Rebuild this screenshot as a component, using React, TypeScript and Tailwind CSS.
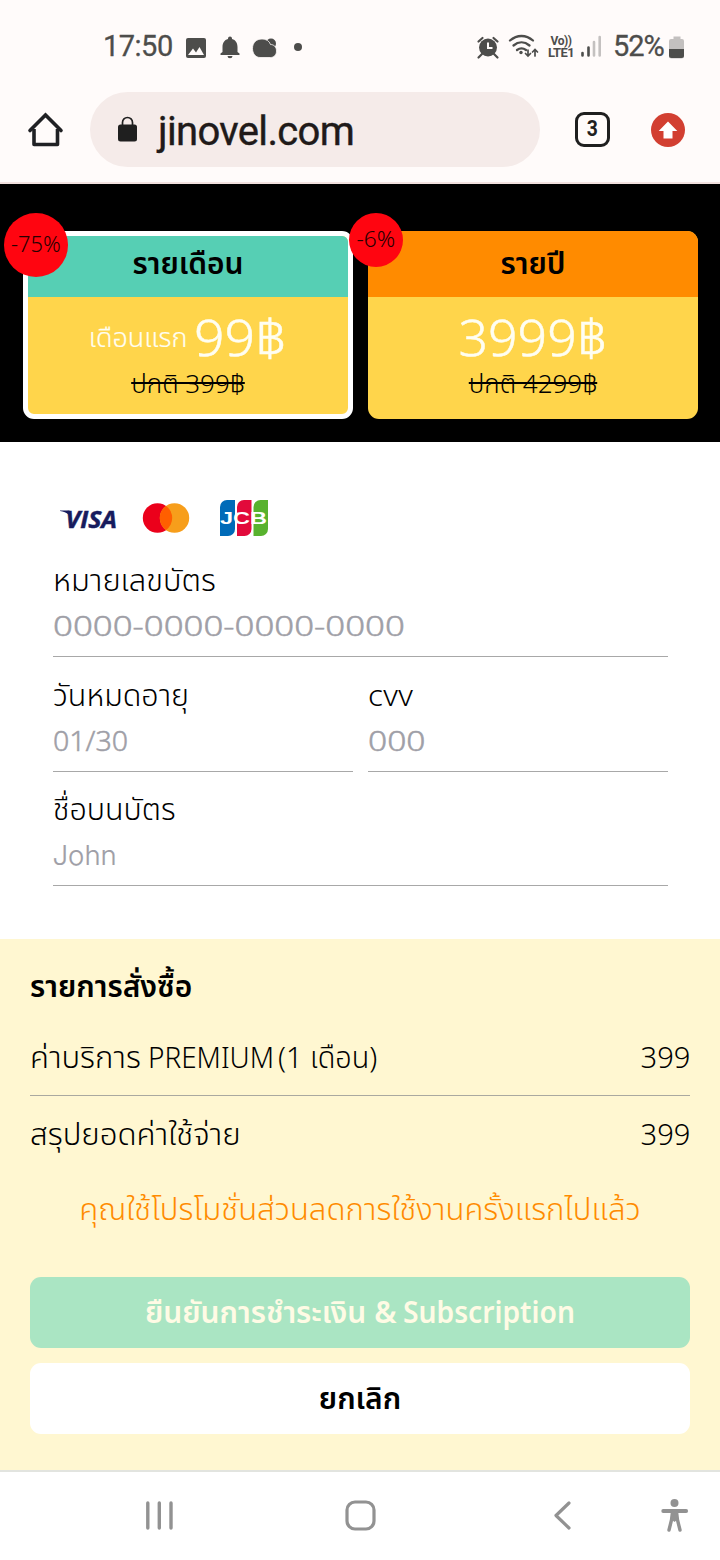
import type { ReactNode } from "react";

type PlanProps = {
  title: ReactNode;
  price: ReactNode;
  regular: ReactNode;
  badge: ReactNode;
  cardClass: string;
  headClass: string;
};

function Plan({ title, price, regular, badge, cardClass, headClass }: PlanProps) {
  return (
    <div className="relative h-[188px] w-[330px]">
      <div className={`h-full overflow-hidden rounded-[11px] bg-[#ffd54b] text-center ${cardClass}`}>
        <div className={`flex items-center justify-center text-[30px] leading-[40px] font-semibold whitespace-nowrap ${headClass}`}>{title}</div>
        <div className="flex h-[74px] items-center justify-center pt-[6px] leading-[50px] font-light whitespace-nowrap text-[#fffef2] [-webkit-text-stroke:0.5px_#fffef2]">{price}</div>
        <div className="flex h-[24px] items-center justify-center text-[26px] leading-[24px] font-light whitespace-nowrap text-black">{regular}</div>
      </div>
      {badge}
    </div>
  );
}

type FieldProps = { label: ReactNode; placeholder: ReactNode; className?: string };

function Field({ label, placeholder, className = "" }: FieldProps) {
  return (
    <div className={`border-b border-[#a8a8a8] pb-[8px] whitespace-nowrap ${className}`}>
      <div className="h-[44px] text-[30px] leading-[44px] text-black">{label}</div>
      <div className="h-[46px] text-[28px] leading-[46px] font-light text-[#9f9fa7] [-webkit-text-stroke:0.5px_#9f9fa7]">{placeholder}</div>
    </div>
  );
}

function StatusBar() {
  return (
    <div className="flex h-[92px] items-start font-[Roboto,sans-serif] font-normal text-[#4d4d4b]">
      <span className="mt-[28px] ml-[103px] w-[71px] text-[29px] leading-[36px] tracking-[-0.5px] [-webkit-text-stroke:0.3px_#4d4d4b]">17:50</span>
      <svg className="mt-[28px] ml-[6px]" width="130" height="40" viewBox="180 28 130 40" fill="#4d4d4b">
        <rect x="186" y="38" width="20" height="20" rx="2" />
        <path d="M188 55 193 48.500 196 52.500 199.500 47 204 55Z" fill="#fffbfa" />
        <path d="M230 36.500a2 2 0 0 1 2 2v.5c3.800 1 5.500 4 5.500 8v5l2 1.500v1.500h-19v-1.500l2-1.500v-5c0-4 1.700-7 5.500-8v-.5a2 2 0 0 1 2-2zM227.500 56h5a2.500 2.200 0 0 1-5 0z" />
        <circle cx="271" cy="43.500" r="5" />
        <path d="M260 57.500c-4.500 0-7.500-4-7.500-9 0-6 4-9.500 9.500-9.500 4 0 7.500 2 8.500 5.500 3.500 0 6 2.500 6 6.500s-2.500 6.500-6 6.500z" stroke="#fffbfa" strokeWidth="0.800" />
        <circle cx="298" cy="47" r="4" />
      </svg>
      <svg className="mt-[30px] ml-[166px]" width="64" height="36" viewBox="476 30 64 36" fill="none" stroke="#4d4d4b" strokeWidth="2.500" strokeLinecap="round">
        <circle cx="488" cy="47.500" r="9" fill="#4d4d4b" stroke="none" />
        <path d="M482 54l-3.500 3.500M494 54l3.500 3.500M478.500 41.500l4-3.500M497.500 41.500l-4-3.500" strokeWidth="2.200" />
        <path d="M488 42.500v5.500h4.500" stroke="#fffbfa" strokeWidth="2" strokeLinecap="butt" />
        <path d="M510 40.500c7-6 16-6 23 0M513.500 45.500c5-4.200 11-4.200 16 0M517 50c3-2.200 6-2.200 9 0" strokeWidth="2.300" />
        <circle cx="521" cy="52.500" r="1.700" fill="#4d4d4b" stroke="none" />
        <path d="M528 50v6M525.500 53.500l2.500 2.500 2.500-2.500M535 56v-6.500M532.500 52l2.500-2.500 2.500 2.500" strokeWidth="1.700" />
      </svg>
      <div className="mt-[35px] ml-[6px] w-[30px] text-center text-[12px] leading-[12px] font-bold whitespace-nowrap">
        <div className="tracking-[-0.5px]">Vo))</div>
        <div className="scale-x-[1.08] tracking-[-0.5px]">LTE1</div>
      </div>
      <svg className="mt-[34px] ml-[4px]" width="24" height="26" viewBox="580 34 24 26" strokeWidth="2.600" strokeLinecap="round">
        <path d="M582.500 53v2.500M588.500 47.500v8" stroke="#4d4d4b" />
        <path d="M594 42v13.500M599.700 37v18.500" stroke="#c4c1c0" />
      </svg>
      <span className="mt-[28px] ml-[9px] w-[53px] text-[29px] leading-[36px] tracking-[-1px] [-webkit-text-stroke:0.3px_#4d4d4b]">52%</span>
      <svg className="mt-[34px] ml-[2px]" width="18" height="28" viewBox="668 34 18 28">
        <path d="M673.500 36.500h7v2.500h1.500a2 2 0 0 1 2 2V56a2.500 2.500 0 0 1-2.500 2.500h-10A2.500 2.500 0 0 1 669 56V41a2 2 0 0 1 2-2h2.500z" fill="#c3c0bf" />
        <path d="M669 49h15v6.500a2.500 2.500 0 0 1-2.500 2.500h-10a2.500 2.500 0 0 1-2.500-2.500z" fill="#4d4d4b" />
      </svg>
    </div>
  );
}

function BrowserBar() {
  return (
    <div className="flex h-[92px] items-start border-b-2 border-[#f2e1df] font-[Roboto,sans-serif] font-normal">
      <svg className="mt-[18px] ml-[26px]" width="40" height="40" viewBox="26 110 40 40" fill="none" stroke="#202124" strokeWidth="3.600">
        <path d="M30 130.500 45.500 115 61 130.500" strokeLinecap="round" />
        <path d="M34 129v15.500h23.500V129" strokeLinejoin="round" />
      </svg>
      <div className="ml-[24px] flex h-[75px] w-[450px] items-center rounded-full bg-[#f5ebe9]">
        <svg className="ml-[26px]" width="24" height="30" viewBox="116 115 24 30">
          <rect x="118" y="124.500" width="19" height="17" rx="2.500" fill="#1f1f1f" />
          <path d="M122.500 125v-2.500a5 5 0 0 1 10 0v2.500" fill="none" stroke="#1f1f1f" strokeWidth="1.700" />
        </svg>
        <span className="mt-[4px] ml-[18px] text-[40px] leading-[48px] tracking-[-0.65px] text-[#201a19] [-webkit-text-stroke:0.4px_#201a19]">jinovel.com</span>
      </div>
      <div className="mt-[20px] ml-[35px] flex h-[35px] w-[35px] items-center justify-center rounded-[9px] border-[3.600px] border-[#1f1f1f] text-[22px] leading-[26px] font-bold text-[#1f1f1f]">
        <span className="-mt-[2px] scale-x-[0.88]">3</span>
      </div>
      <svg className="mt-[20px] ml-[40px]" width="36" height="36" viewBox="650 112 36 36">
        <circle cx="668" cy="130" r="17" fill="#d23f31" />
        <path d="M668 121.500l9.300 9.500h-4.800v7.500h-9V131h-4.800z" fill="#fff" />
      </svg>
    </div>
  );
}

function CardLogos() {
  return (
    <svg className="mt-[51px]" width="240" height="50" viewBox="53 494 240 50">
      <text x="65.500" y="528" fontFamily="Open Sans, sans-serif" fontWeight="700" fontStyle="italic" fontSize="24" textLength="51.500" lengthAdjust="spacingAndGlyphs" fill="#171b5d" stroke="#171b5d" strokeWidth="0.500">VISA</text>
      <path d="M60 510.500h9.500l2 9-3-5c-2-1.800-5-3.200-8.500-3.500z" fill="#171b5d" />
      <circle cx="157.500" cy="518" r="14.700" fill="#eb001b" />
      <circle cx="174.500" cy="518" r="14.700" fill="#f79e1b" />
      <path d="M166 506a14.700 14.700 0 0 1 0 24 14.700 14.700 0 0 1 0-24z" fill="#ff5f00" />
      <path d="M227 500h8v29a7 7 0 0 1-7 7h-8v-29a7 7 0 0 1 7-7z" fill="#006bb8" />
      <path d="M244 500h7.500v29a7 7 0 0 1-7 7H237v-29a7 7 0 0 1 7-7z" fill="#e20a3b" />
      <path d="M260.500 500h7.500v29a7 7 0 0 1-7 7h-7.500v-29a7 7 0 0 1 7-7z" fill="#58b22e" />
      <text x="220" y="523.500" fontFamily="Liberation Sans, sans-serif" fontWeight="700" fontSize="16" textLength="47" lengthAdjust="spacingAndGlyphs" fill="#fff">JCB</text>
    </svg>
  );
}

function NavBar() {
  return (
    <div className="h-[90px] border-t-2 border-[#e2e4df] bg-white">
      <svg width="720" height="88" viewBox="0 1472 720 88" fill="none" stroke="#929292" strokeLinecap="round">
        <path d="M147.800 1503v25M159.300 1503v25M171 1503v25" strokeWidth="3.400" />
        <rect x="347" y="1502" width="27" height="27" rx="8" strokeWidth="3.200" />
        <path d="M569 1503l-13 12.500 13 12.500" strokeWidth="3.200" strokeLinejoin="round" />
        <circle cx="674.500" cy="1503" r="4" fill="#929292" stroke="none" />
        <path d="M663.200 1511h23" strokeWidth="3.800" />
        <path d="M672.500 1512l-1 8-2.500 10M676.500 1512l1 8 2.500 10" strokeWidth="3.400" />
        <path d="M671 1511h7v8l-3.500 3-3.500-3z" fill="#929292" stroke="none" />
      </svg>
    </div>
  );
}

export default function App() {
  return (
    <main className="h-[1560px] w-[720px] overflow-hidden bg-white font-['Noto_Sans','Noto_Sans_Thai',sans-serif] font-light">
      <header className="bg-[#fffbfa]">
        <StatusBar />
        <BrowserBar />
      </header>

      <section className="flex h-[258px] gap-[15px] bg-black pt-[47px] pl-[23px]">
        <Plan
          title={<span>รายเดือน</span>}
          price={<><span className="text-[27px] [-webkit-text-stroke:0.2px_#fffef2]">เดือนแรก</span><span className="mr-[4px] ml-[10px] scale-x-[1.07] text-[50px]">99฿</span></>}
          regular={<span className="line-through">ปกติ 399฿</span>}
          cardClass="border-[5px] border-white"
          headClass="h-[61px] bg-[#56cfb4] pb-[8px]"
          badge={<div className="absolute -top-[18px] -left-[19px] flex h-[64px] w-[64px] items-center justify-center rounded-full bg-[#ff0510] text-[21px] text-[#260000]"><span className="scale-x-[1.04]">-75%</span></div>}
        />
        <Plan
          title={<span>รายปี</span>}
          price={<span className="scale-x-[1.035] text-[50px]">3999฿</span>}
          regular={<span className="line-through">ปกติ 4299฿</span>}
          cardClass=""
          headClass="h-[66px] bg-[#ff8b00] pb-[3px]"
          badge={<div className="absolute -top-[18px] -left-[19px] flex h-[54px] w-[54px] items-center justify-center rounded-full bg-[#ff0510] text-[21px] text-[#260000]"><span className="scale-x-[1.08]">-6%</span></div>}
        />
      </section>

      <section className="h-[497px] px-[52.500px] pt-px">
        <CardLogos />
        <div className="mt-[14px] flex flex-col gap-[15.500px]">
          <Field
            label={<span className="inline-block origin-left scale-x-[1.03]">หมายเลขบัตร</span>}
            placeholder={<span className="inline-block origin-left scale-x-[1.244]">0000-0000-0000-0000</span>}
          />
          <div className="flex gap-[15px]">
            <Field
              className="flex-1"
              label={<span className="inline-block origin-left scale-x-[1.015]">วันหมดอายุ</span>}
              placeholder={<span className="inline-block origin-left scale-x-[1.02]">01/30</span>}
            />
            <Field
              className="flex-1"
              label={<span className="inline-block origin-left scale-x-[1.04] tracking-[0.4px]">cvv</span>}
              placeholder={<span className="inline-block origin-left scale-x-[1.2]">000</span>}
            />
          </div>
          <Field
            label={<span className="inline-block origin-left scale-x-[1.015]">ชื่อบนบัตร</span>}
            placeholder={<span className="font-[Inter,sans-serif] text-[27.500px] font-light [-webkit-text-stroke:0.2px_#9f9fa7]">John</span>}
          />
        </div>
      </section>

      <section className="h-[531px] bg-[#fff7d1] px-[30px] pt-[24px] text-[30px] whitespace-nowrap text-black">
        <h2 className="h-[46px] leading-[46px] font-semibold">รายการสั่งซื้อ</h2>
        <div className="mt-[25px] flex h-[62px] justify-between border-b border-[#aaa9a0] leading-[46px]">
          <span>
            <span className="inline-block w-[118px] origin-left scale-x-[1.035]">ค่าบริการ</span>
            <span className="inline-block w-[124px] origin-left scale-x-[0.93]">PREMIUM</span>
            <span className="ml-[6px] inline-block origin-left scale-x-[0.96]">(1 เดือน)</span>
          </span>
          <span className="origin-right scale-x-[0.97]">399</span>
        </div>
        <div className="mt-[15px] flex h-[46px] justify-between leading-[46px]">
          <span className="origin-left scale-x-[1.04]">สรุปยอดค่าใช้จ่าย</span>
          <span className="origin-right scale-x-[0.97]">399</span>
        </div>
        <p className="mt-[29px] h-[46px] scale-x-[1.037] text-center leading-[46px] text-[#ff8b00]">คุณใช้โปรโมชั่นส่วนลดการใช้งานครั้งแรกไปแล้ว</p>
        <button className="mt-[45px] block h-[71px] w-full rounded-[11px] bg-[#aae5c3] pb-[2px] font-semibold text-[#fffbe5]">
          ยืนยันการชำระเงิน <span className="tracking-[-1px]">&amp;</span> <span className="-mr-[11px] inline-block origin-left scale-x-[0.94]">Subscription</span>
        </button>
        <button className="mt-[15px] block h-[71px] w-full rounded-[11px] bg-white pb-[2px] font-semibold">ยกเลิก</button>
      </section>
      <NavBar />
    </main>
  );
}
